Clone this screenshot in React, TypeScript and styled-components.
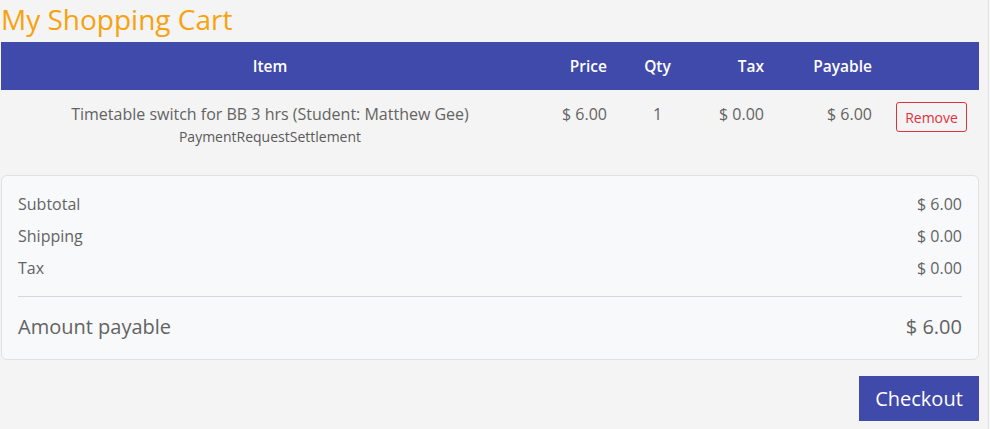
import React from 'react';
import styled, { createGlobalStyle } from 'styled-components';

const GlobalStyle = createGlobalStyle`
  html, body {
    margin: 0;
    padding: 0;
    background: #f4f4f4;
    font-family: "Open Sans", "Noto Sans", sans-serif;
  }
`;

const Page = styled.div({
  width: "978px",
  padding: "0 0 0 1px",
  display: "flex",
  flexDirection: "column",
})

const Title = styled.h1({
  margin: "0",
  padding: "2px 0 0 0",
  height: "42px",
  boxSizing: "border-box",
  color: "#f7a20f",
  fontSize: "28px",
  fontWeight: 400,
  lineHeight: "34px",
})

const cols = "538px 76px 85px 72px 108px 99px";

const HeadRow = styled.div({
  display: "grid",
  gridTemplateColumns: cols,
  height: "48px",
  alignItems: "center",
  background: "#3f4aab",
  color: "#ffffff",
  fontSize: "15.5px",
  fontWeight: 600,
})

const BodyRow = styled.div({
  display: "grid",
  gridTemplateColumns: cols,
  alignItems: "start",
  padding: "12px 0 0 0",
  height: "73px",
  boxSizing: "border-box",
  color: "#636363",
  fontSize: "16px",
})

const Cell = styled.div<{ $align: "center" | "right" | "left" }>`
  padding: 0 8px;
  text-align: ${p => p.$align};
  line-height: 24px;
`;

const SubText = styled.div({
  fontSize: "14px",
  lineHeight: "22px",
  color: "#5a5a5a",
})

const RemoveButton = styled.button({
  margin: "0 0 0 8px",
  height: "30px",
  width: "71px",
  padding: "0",
  background: "transparent",
  border: "1px solid #e0313f",
  borderRadius: "3px",
  color: "#e0313f",
  fontFamily: "inherit",
  fontSize: "14px",
  cursor: "pointer",
})

const Summary = styled.div({
  marginTop: "12px",
  border: "1px solid #dfe1e4",
  borderRadius: "6px",
  background: "#f8f9fb",
  padding: "12px 16px 14px 16px",
  display: "flex",
  flexDirection: "column",
})

const Line = styled.div<{ $big?: boolean }>`
  display: flex;
  justify-content: space-between;
  color: #636363;
  font-size: ${p => (p.$big ? "20px" : "16px")};
  line-height: ${p => (p.$big ? "36px" : "32px")};
`;

const Divider = styled.hr({
  margin: "12px 0 12px 0",
  border: "none",
  borderTop: "1px solid #d6d8db",
})

const Footer = styled.div({
  display: "flex",
  justifyContent: "flex-end",
  marginTop: "16px",
})

const CheckoutButton = styled.button({
  height: "45px",
  width: "120px",
  border: "none",
  background: "#3f4aab",
  color: "#ffffff",
  fontFamily: "inherit",
  fontSize: "20px",
  cursor: "pointer",
})

const Edge = styled.div({
  position: "fixed",
  top: 0,
  bottom: 0,
  left: "988px",
  width: "1px",
  background: "#e3e3e3",
})

function App() {
  return (
    <>
      <GlobalStyle />
      <Page>
        <Title>My Shopping Cart</Title>
        <HeadRow>
          <Cell $align="center">Item</Cell>
          <Cell $align="right">Price</Cell>
          <Cell $align="center">Qty</Cell>
          <Cell $align="right">Tax</Cell>
          <Cell $align="right">Payable</Cell>
          <Cell $align="left"></Cell>
        </HeadRow>
        <BodyRow>
          <Cell $align="center">
            Timetable switch for BB 3 hrs (Student: Matthew Gee)
            <SubText>PaymentRequestSettlement</SubText>
          </Cell>
          <Cell $align="right">$ 6.00</Cell>
          <Cell $align="center">1</Cell>
          <Cell $align="right">$ 0.00</Cell>
          <Cell $align="right">$ 6.00</Cell>
          <Cell $align="left">
            <RemoveButton>Remove</RemoveButton>
          </Cell>
        </BodyRow>
        <Summary>
          <Line><span>Subtotal</span><span>$ 6.00</span></Line>
          <Line><span>Shipping</span><span>$ 0.00</span></Line>
          <Line><span>Tax</span><span>$ 0.00</span></Line>
          <Divider />
          <Line $big><span>Amount payable</span><span>$ 6.00</span></Line>
        </Summary>
        <Footer>
          <CheckoutButton>Checkout</CheckoutButton>
        </Footer>
      </Page>
      <Edge />
    </>
  );
}

export default App;
